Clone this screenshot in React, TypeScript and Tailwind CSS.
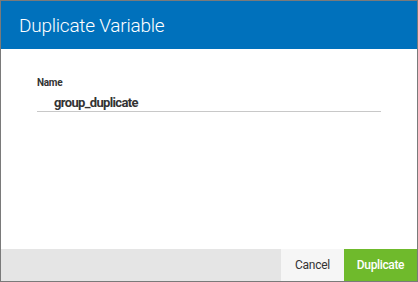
export default function App() {
  return (
    <div className="w-[418px] h-[282px] border border-[#7a7a7a] bg-white flex flex-col" style={{ fontFamily: "Roboto, 'Noto Sans', sans-serif" }}>
      <div className="h-[48px] bg-[#0071bc] flex items-center pl-[18px] shrink-0">
        <span className="text-white text-[19px] font-light leading-none tracking-[-0.012em] pt-[1px]">Duplicate Variable</span>
      </div>
      <div className="flex-1 pt-[29px] pl-[36px] pr-[36px]">
        <div className="text-[10px] font-bold text-[#333] leading-none tracking-[-0.03em]">Name</div>
        <div className="mt-[7px] border-b border-[#c8c8c8] pb-[2px] pl-[17px] leading-[13px]">
          <span className="text-[13px] font-bold text-[#333] leading-[13px] tracking-[-0.05em]">group_duplicate</span>
        </div>
      </div>
      <div className="h-[32px] bg-[#e5e5e5] flex justify-end shrink-0">
        <button className="w-[63px] h-full bg-[#f6f6f6] text-[12px] text-[#333] tracking-[-0.02em]">Cancel</button>
        <button className="w-[73px] h-full bg-[#6fba2c] text-[12px] font-medium text-white tracking-[-0.03em]">Duplicate</button>
      </div>
    </div>
  );
}
